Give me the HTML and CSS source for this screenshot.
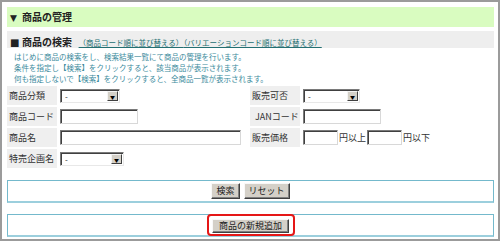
FILE: index.html
```html
<!DOCTYPE html>
<html lang="ja">
<head>
    <meta charset="UTF-8">
    <title>商品の管理</title>
    <link rel="stylesheet" href="styles.css">
</head>
<body>
    <div class="panel">
        <h2 class="panel-title"><span class="mark">▼</span>商品の管理</h2>

        <div class="section-bar">
            <span class="section-title"><span class="mark">■</span>商品の検索</span>
            <a href="#" class="sort-link">（商品コード順に並び替える）</a><a href="#" class="sort-link">（バリエーションコード順に並び替える）</a>
        </div>

        <p class="note">
            はじめに商品の検索をし、検索結果一覧にて商品の管理を行います。<br>
            条件を指定し【検索】をクリックすると、該当商品が表示されます。<br>
            何も指定しないで【検索】をクリックすると、全商品一覧が表示されます。
        </p>

        <form class="search-grid">
            <div class="label">商品分類</div>
            <div class="field">
                <span class="select w60"><select><option>-</option></select><span class="arrow">▼</span></span>
            </div>
            <div class="label">販売可否</div>
            <div class="field">
                <span class="select w57"><select><option>-</option></select><span class="arrow">▼</span></span>
            </div>

            <div class="label">商品コード</div>
            <div class="field"><input type="text" class="w78"></div>
            <div class="label label-center">JANコード</div>
            <div class="field"><input type="text" class="w78"></div>

            <div class="label">商品名</div>
            <div class="field"><input type="text" class="w181"></div>
            <div class="label">販売価格</div>
            <div class="field">
                <input type="text" class="w35"><span class="unit">円以上</span><input type="text" class="w35"><span class="unit">円以下</span>
            </div>

            <div class="label">特売企画名</div>
            <div class="field">
                <span class="select w64"><select><option>-</option></select><span class="arrow">▼</span></span>
            </div>
            <div class="blank"></div>
            <div class="blank"></div>
        </form>

        <div class="action-box">
            <button type="button" class="btn">検索</button>
            <button type="button" class="btn">リセット</button>
        </div>

        <div class="action-box action-box-new">
            <span class="highlight"><button type="button" class="btn btn-new">商品の新規追加</button></span>
        </div>
    </div>
</body>
</html>
```

FILE: styles.css
```css
/* Base */
body {
    margin: 0;
    font-family: "Noto Sans CJK JP", "Noto Sans", sans-serif;
    color: #222;
    background: #fff;
}

.panel {
    width: 500px;
    height: 241px;
    box-sizing: border-box;
    border: 2px solid #9b9b9b;
    padding: 5px 4px 0 5px;
    overflow: hidden;
}

/* Headings */
.panel-title {
    margin: 0;
    height: 20px;
    line-height: 20px;
    padding-left: 3px;
    font-size: 10px;
    font-weight: bold;
    background-color: #d9fcc0;
}

.mark {
    display: inline-block;
    width: 12px;
    font-size: 9px;
    font-family: "DejaVu Sans", sans-serif;
}

.section-bar {
    margin-top: 4px;
    height: 17px;
    line-height: 17px;
    padding-left: 3px;
    background-color: #eeeeee;
    white-space: nowrap;
}

.section-title {
    font-size: 10px;
    font-weight: bold;
    margin-right: 3px;
}

.section-title .mark {
    font-size: 10px;
}

.sort-link {
    font-size: 7.5px;
    color: #236f72;
}

.note {
    margin: 3px 0 2px 7px;
    font-size: 7.5px;
    line-height: 11px;
    color: #3a8a9c;
}

/* Search form */
.search-grid {
    display: grid;
    grid-template-columns: 50px 193px 50px 1fr;
    grid-auto-rows: 19px;
    row-gap: 2px;
    margin: 0;
}

.label {
    background-color: #efefef;
    font-size: 9px;
    line-height: 19px;
    padding-left: 2px;
    color: #333;
    white-space: nowrap;
}

.label-center {
    padding-left: 5px;
}

.field {
    display: flex;
    align-items: center;
    padding-left: 3px;
}

.field input {
    height: 15px;
    box-sizing: border-box;
    margin: 0;
    padding: 0 2px;
    border: 1px solid;
    border-color: #7a7a7a #d8d8d8 #d8d8d8 #7a7a7a;
    box-shadow: inset 1px 1px 0 #404040;
    font-size: 9px;
    background: #fff;
}

.w35 { width: 35px; }
.w78 { width: 78px; }
.w181 { width: 181px; }
.w57 { width: 57px; }
.w60 { width: 60px; }
.w64 { width: 64px; }

.unit {
    font-size: 9px;
    margin: 0 1px 0 1px;
    color: #333;
}

.select {
    display: inline-flex;
    height: 14px;
    box-sizing: border-box;
    border: 1px solid;
    border-color: #7a7a7a #e8e8e8 #e8e8e8 #7a7a7a;
    box-shadow: inset 1px 1px 0 #404040;
    background: #fff;
}

.select select {
    flex: 1;
    min-width: 0;
    appearance: none;
    -webkit-appearance: none;
    border: none;
    background: transparent;
    font-size: 8px;
    padding: 0 0 0 3px;
    margin: 1px 0 0 1px;
    font-family: inherit;
    color: #222;
    outline: none;
}

.select .arrow {
    width: 11px;
    margin: 1px 1px 1px 0;
    box-sizing: border-box;
    background: #d4d0c8;
    border: 1px solid;
    border-color: #f4f4f4 #404040 #404040 #f4f4f4;
    font-size: 5px;
    line-height: 9px;
    text-align: center;
    color: #000;
}

/* Action boxes */
.action-box {
    height: 23px;
    box-sizing: border-box;
    margin-top: 12px;
    padding-top: 2px;
    border: 1px solid #74b9cc;
    border-bottom: 2px solid #9ccfdd;
    text-align: center;
    font-size: 0;
}

.action-box-new {
    margin-top: 11px;
    padding-top: 4px;
}

.btn {
    height: 16px;
    margin: 0 2px;
    padding: 0 4px;
    font-family: inherit;
    font-size: 9px;
    line-height: 14px;
    color: #222;
    background-color: #d4d0c8;
    border: 1px solid;
    border-color: #f8f8f8 #404040 #404040 #f8f8f8;
    box-shadow: inset -1px -1px 0 #808080;
    vertical-align: top;
}

.btn-new {
    height: 14px;
    line-height: 12px;
    padding: 0 6px;
}

.highlight {
    position: relative;
    display: inline-block;
}

.highlight::after {
    content: "";
    position: absolute;
    top: -5px;
    right: -4px;
    bottom: -3px;
    left: -3px;
    border: 2px solid #e51717;
    border-radius: 4px;
}
```
